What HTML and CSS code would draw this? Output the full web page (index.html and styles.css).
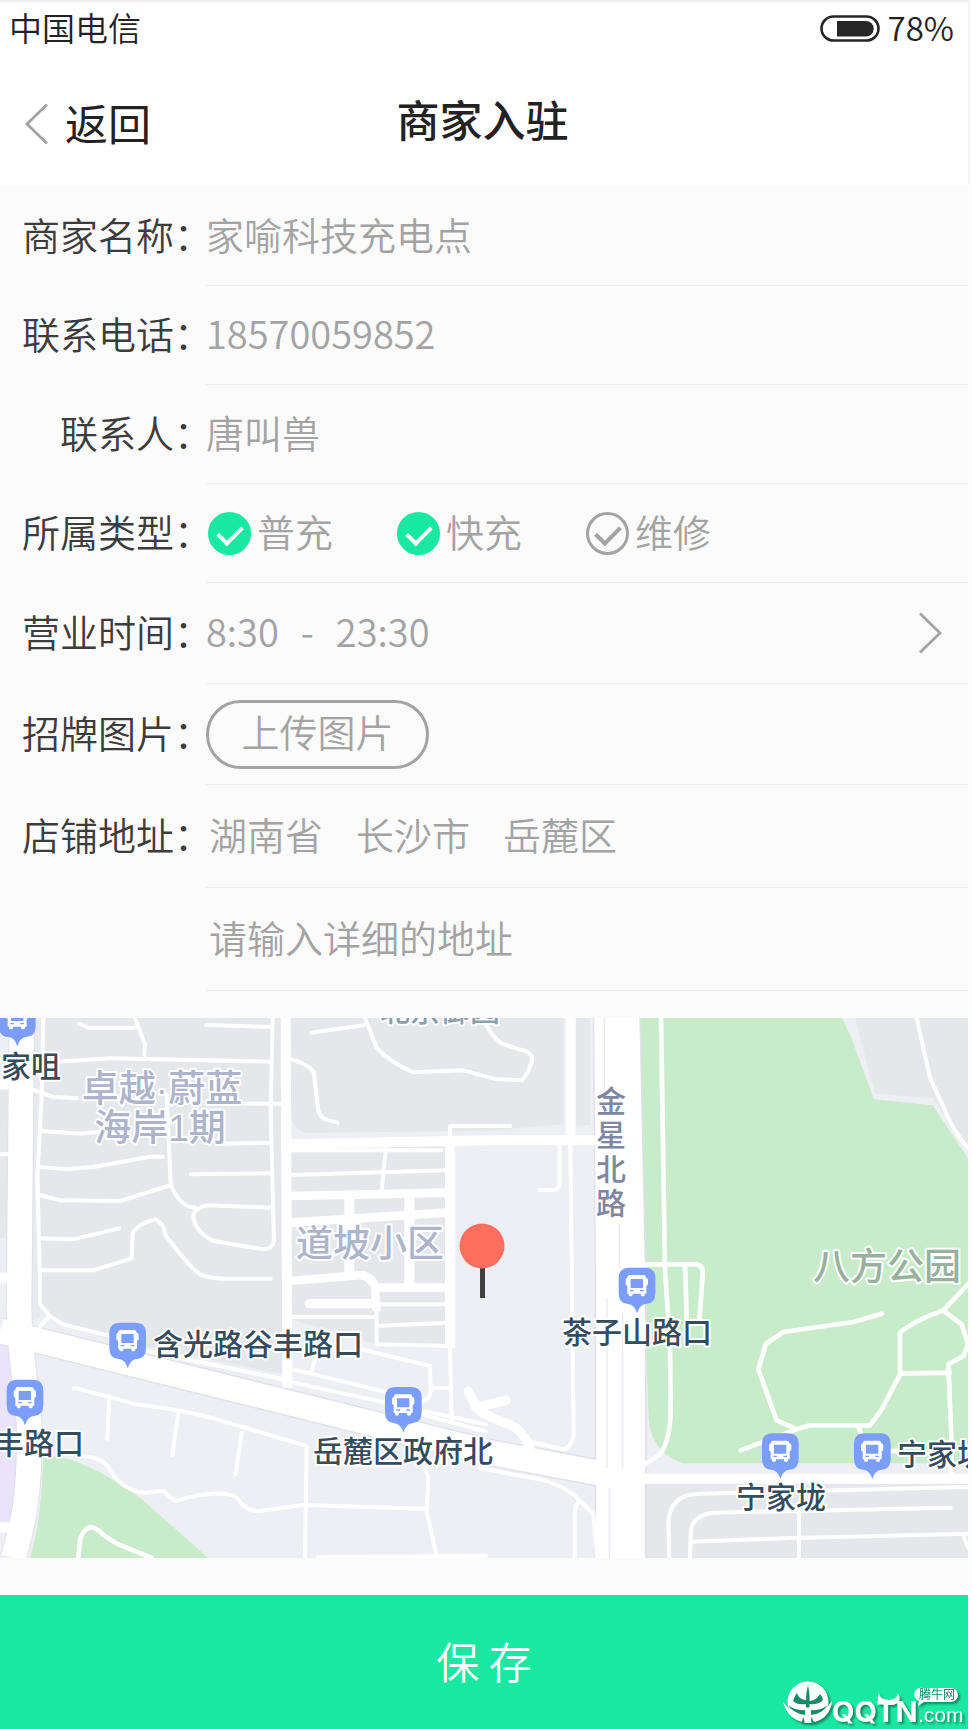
FILE: index.html
```html
<!DOCTYPE html>
<html lang="zh-CN">
<head>
  <meta charset="UTF-8" />
  <meta name="viewport" content="width=device-width, initial-scale=1.0" />
  <title>商家入驻</title>
  <link rel="stylesheet" href="styles.css">
</head>
<body>
  <div class="page">
    <!-- 顶部 -->
    <header class="header">
      <div class="status-bar">
        <span>中国电信</span>
        <span class="battery">
          <svg width="60" height="28" viewBox="0 0 60 28" aria-hidden="true">
            <rect x="1.500" y="1.500" width="57" height="24" rx="12" fill="none" stroke="#262626" stroke-width="2.600" />
            <path d="M17 6h29a7.700 7.700 0 0 1 0 15.400H17z" fill="#262626" />
          </svg>
          78%
        </span>
      </div>
      <div class="nav">
        <a class="back" href="#">
          <svg width="24" height="42" viewBox="0 0 24 42" aria-hidden="true">
            <path d="M22 1.500L2 21l20 19.500" fill="none" stroke="#a3a3a3" stroke-width="2.800" />
          </svg>
          <span>返回</span>
        </a>
        <h1>商家入驻</h1>
      </div>
    </header>

    <!-- 入驻表单 -->
    <form id="shop" class="form">
      <div class="row">
        <label class="label" for="name">商家名称：</label>
        <div class="field"><input type="text" id="name" value="家喻科技充电点" /></div>
      </div>
      <div class="row">
        <label class="label" for="phone">联系电话：</label>
        <div class="field"><input type="tel" id="phone" value="18570059852" /></div>
      </div>
      <div class="row">
        <label class="label" for="contact">联系人：</label>
        <div class="field"><input type="text" id="contact" value="唐叫兽" /></div>
      </div>
      <div class="row">
        <span class="label" id="typeLabel">所属类型：</span>
        <div class="field types" role="group" aria-labelledby="typeLabel">
          <label class="type"><input type="checkbox" checked /><span>普充</span></label>
          <label class="type"><input type="checkbox" checked /><span>快充</span></label>
          <label class="type"><input type="checkbox" /><span>维修</span></label>
        </div>
      </div>
      <div class="row row-md">
        <label class="label" for="hours">营业时间：</label>
        <div class="field">
          <button type="button" id="hours" class="hours">
            <span>8:30</span><span>-</span><span>23:30</span>
            <svg width="24" height="42" viewBox="0 0 24 42" aria-hidden="true">
              <path d="M2 1.500L22 21L2 40.500" fill="none" stroke="#a3a3a3" stroke-width="2.800" />
            </svg>
          </button>
        </div>
      </div>
      <div class="row row-md">
        <label class="label" for="upload">招牌图片：</label>
        <div class="field"><button type="button" id="upload" class="upload">上传图片</button></div>
      </div>
      <div class="row row-lg">
        <label class="label" for="province">店铺地址：</label>
        <div class="field area">
          <select id="province"><option>湖南省</option></select>
          <select aria-label="城市"><option>长沙市</option></select>
          <select aria-label="区县"><option>岳麓区</option></select>
        </div>
      </div>
      <div class="row row-lg">
        <span class="label"></span>
        <div class="field area"><input type="text" aria-label="详细地址" placeholder="请输入详细的地址" /></div>
      </div>
    </form>

    <!-- 地图 -->
    <svg class="map" viewBox="0 0 968 540" role="img" aria-label="地图">
      <svg width="968" height="540" viewBox="0 21 2904 1620">
        <defs>
          <g id="stop">
            <path d="M32 0h46q32 0 32 32v44q0 32-28 33q-20 2-27 28q-7-26-27-28q-28-1-28-33v-44q0-32 32-32z" fill="#7b9dfb" />
            <path d="M32 22h44q5 0 6 8q6 1 6 8v11q0 4-5 5v24h-5v3q0 5-6 5t-6-5v-3h-24v3q0 5-6 5t-6-5v-3h-4v-24q-5-1-5-5v-11q0-7 5-8q1-8 6-8z" fill="#fff" />
            <path d="M36 34h37v27h-37zM34 67h11v4h-11zM64 67h11v4h-11z" fill="#7b9dfb" />
          </g>
        </defs>

        <!-- 地块 -->
        <rect y="21" width="2904" height="1620" fill="#eeeff4" />
        <g fill="#e6e7eb">
          <path d="M125 21H850V1090L330 985L150 925L115 870z" />
          <path d="M100 21h30l-15 420l5 480l-25 10z" fill="#e9eaf0" />
          <path d="M870 21H1690V340L1458 360L920 365Q885 360 872 320z" />
          <path d="M1728 21h42v320l-42 4z" />
          <path d="M870 405H1335V1000L1130 1000L870 925z" />
          <path d="M0 240h22v440H0z" />
          <path d="M1935 1418H2904V1641H1935z" />
          <path d="M2565 21H2904V420L2800 262L2625 248z" />
        </g>
        <path d="M1918 21H2525L2550 70L2622 265L2798 283L2904 442V1357H2050Q1945 1325 1945 1200L1930 760z" fill="#c8ecca" />
        <path d="M130 1330L210 1345Q330 1390 420 1460L625 1641H90Q125 1530 130 1330z" fill="#c8ecca" />
        <path d="M0 980L22 1000L50 1190Q60 1400 32 1530H0z" fill="#e9e4fa" />

        <!-- 道路描边 -->
        <g fill="none" stroke="#dfe0ea" stroke-linejoin="round">
          <path d="M65 21L57 900C60 1050 85 1150 88 1250C90 1450 70 1540 40 1641" stroke-width="80" />
          <path d="M0 960L100 985L1458 1322L1860 1398" stroke-width="82" />
        </g>
        <path d="M1779 21H1922L1940 810V1641H1784V800z" fill="#dfe0ea" />

        <!-- 小路 -->
        <g fill="none" stroke="#fff" stroke-width="12" stroke-linejoin="round" stroke-linecap="round">
          <path d="M130 21L125 260L112 500L120 800V880L150 915L190 940L330 975M150 915L120 945" />
          <path d="M818 21L812 300L822 690Q815 715 790 715L640 690Q580 660 580 610Q590 590 620 583L815 590" />
          <path d="M238 38L265 50H405M405 21L435 100L433 132M618 42L815 48M125 155L330 142L810 152" />
          <path d="M95 235L160 258L230 262M735 278H845M125 360L240 368L300 362M670 398L815 395" />
          <path d="M500 250L512 520Q540 590 585 590M120 468L200 475L280 468L450 437H488M572 490L815 487" />
          <path d="M120 552L180 568L360 570L505 525M120 682L220 685L358 652" />
          <path d="M120 778H280L395 742L398 665Q420 635 465 625Q495 640 495 670Q560 760 600 790Q630 803 680 803H812" />
          <path d="M934 65L1090 43M1095 21L1130 110Q1170 155 1240 184L1390 178L1490 205L1565 208Q1585 190 1596 150Q1598 130 1580 122L1505 98Q1475 75 1458 40" />
          <path d="M875 145Q940 165 942 190L955 300Q965 325 985 328L1012 335M1350 385V345H1530" />
          <path d="M1679 400V510Q1680 537 1660 537H1618M1711 400L1721 1270Q1715 1310 1690 1315L1580 1290" />
          <path d="M870 418H1325M870 492L1340 478M1158 410L1145 538M0 430H25" />
          <path d="M1130 880H1340M880 918H1125M1132 945L1340 935M1130 830V1000L1350 1005L1355 1230" />
          <path d="M222 1130L410 1180Q560 1200 640 1222L920 1305L915 1641M328 1155L322 1283M535 1205L517 1333M725 1265L707 1390" />
          <path d="M250 1336Q310 1340 325 1370Q360 1435 430 1445L490 1440L525 1470Q590 1450 640 1448Q690 1445 710 1460Q740 1505 780 1500L910 1482L1275 1493M1275 1370L1285 1400L1280 1500L1310 1635M955 1638L1458 1634" />
          <path d="M440 1020L850 1105M880 1075L1165 1145M880 1115L1458 1240M1085 1015L1290 1065L1292 1140Q1290 1165 1265 1172M1300 1130H1350M1265 1210L1458 1262M945 1045L935 1080" />
          <path d="M1440 1372L1620 1405Q1700 1425 1740 1470L1780 1510L1793 1641M1740 1470Q1725 1480 1724 1510V1641" />
          <path d="M2750 21L2790 200L2840 310Q2870 375 2904 410" />
          <path d="M2904 1428L2100 1448Q2005 1450 2005 1540L2008 1641M2852 1490L2140 1505Q2070 1515 2072 1570L2070 1641M2072 1592L2400 1580H2420L2904 1568M2397 1500V1641M2890 1572L2904 1610" />
        </g>
        <g fill="none" stroke="#fff" stroke-width="14" stroke-linejoin="round" stroke-linecap="round">
          <path d="M235 1641L240 1585Q265 1520 310 1572L350 1598L455 1641" />
          <path d="M1983 21L1995 780L2010 1000L2012 1200Q2010 1290 1980 1330L1935 1360" />
          <path d="M1930 760H2090Q2110 762 2108 790L2098 930M2055 765L2060 920" />
          <path d="M2645 908L2560 933L2350 963L2298 998L2275 1075L2330 1228L2380 1250M2222 1318L2390 1255L2430 1243H2610L2645 1195L2700 1090V965Q2740 930 2830 898L2904 820" />
          <path d="M2830 898L2885 940L2904 1000L2890 1035L2845 1060L2855 1300V1400M2700 1088L2850 1085M2575 1245L2590 1290M2670 1320H2700" />
        </g>

        <!-- 主干道 -->
        <g fill="none" stroke="#fff" stroke-linejoin="round">
          <path d="M65 21L57 900C60 1050 85 1150 88 1250C90 1450 70 1540 40 1641M0 960L100 985L1458 1322L1860 1398" stroke-width="74" />
          <path d="M0 220H80M0 800H40M0 1550H60M857 21L862 1130M870 400L1458 388H1790M1350 400V1012M1712 21V395M1930 1403H2904" stroke-width="30" />
          <path d="M870 555L1340 545M870 635L1340 605M870 810L1085 792Q1120 800 1130 840M1130 830H1345M1125 840L1130 900" stroke-width="26" />
          <path d="M1048 560V800M1228 560V830" stroke-width="30" />
          <path d="M928 878H1130M1405 1140L1425 1180Q1440 1190 1458 1182L1518 1168M1425 1185Q1450 1215 1530 1240Q1570 1260 1590 1310" stroke-width="28" stroke-linecap="round" />
        </g>
        <path d="M1783 21H1918L1935 810V1641H1788V800z" fill="#fff" />
        <g fill="none" stroke="#e9eaf2" stroke-width="4">
          <path d="M1813 21V240M1858 640V770M1821 860V1370M1868 910V1370M1828 1430V1641" />
        </g>

        <!-- 公交站 -->
        <use href="#stop" x="-3" y="-31" />
        <use href="#stop" x="328" y="935" />
        <use href="#stop" x="20" y="1106" />
        <use href="#stop" x="1155" y="1128" />
        <use href="#stop" x="1856" y="770" />
        <use href="#stop" x="2286" y="1267" />
        <use href="#stop" x="2562" y="1267" />
      </svg>

      <g class="map-area">
        <text x="162" y="84" text-anchor="middle">卓越·蔚蓝</text>
        <text x="160" y="123" text-anchor="middle">海岸1期</text>
        <text x="370" y="239" text-anchor="middle">道坡小区</text>
        <text class="park" x="887" y="262" text-anchor="middle">八方公园</text>
      </g>
      <g class="map-stop">
        <text x="-29" y="59">黄家咀</text>
        <text class="muted" x="440" y="3" text-anchor="middle">北京御园</text>
        <text x="153" y="337">含光路谷丰路口</text>
        <text x="84" y="436" text-anchor="end">谷丰路口</text>
        <text x="403" y="444" text-anchor="middle">岳麓区政府北</text>
        <text x="637" y="325" text-anchor="middle">茶子山路口</text>
        <text x="781" y="490" text-anchor="middle">宁家垅</text>
        <text x="897" y="447">宁家垅</text>
        <text class="road" y="94"><tspan x="596">金</tspan><tspan x="596" dy="34">星</tspan><tspan x="596" dy="34">北</tspan><tspan x="596" dy="34">路</tspan></text>
      </g>

      <!-- 定位点 -->
      <rect x="480" y="245" width="5" height="35" fill="#3f3f3f" />
      <circle cx="482" cy="228" r="22.500" fill="#ff6f5e" />
    </svg>

    <!-- 保存 -->
    <div class="footer">
      <button type="submit" form="shop" class="save">保 存</button>
      <svg class="brand" width="196" height="57" viewBox="0 0 196 57" role="img" aria-label="QQTN.com 腾牛网">
        <circle cx="32" cy="29" r="20.500" fill="#fff" />
        <path d="M7 29Q17 42 32 40Q47 42 56 28Q54 48 32 50Q12 48 7 29z" fill="#fff" />
        <path d="M32 12Q34 22 33.500 28Q40 28 44 21Q49 27 45 29Q39 32 33.500 31V34Q32 35 30 34V31Q22 32 18 29Q16 27 21 20Q23 27 30 27Q30 20 32 12z" fill="#178a68" />
        <path d="M11 32Q20 38 29 37V42Q19 41 11 32zM35 37Q45 38 52 32Q46 41 35 42zM27 44Q29 46 28 50H25Q27 47 27 44zM36 44Q36 47 39 50H36Q34 47 36 44z" fill="#178a68" />
        <path d="M103 20Q98 32 113 32Q128 32 122 20Q121 27 113 27Q104 27 103 20z" fill="#fff" />
        <text class="brand-name" x="56" y="49">QQTN</text>
        <text class="brand-com" x="142" y="49">.com</text>
        <path d="M147 15h28a6.500 6.500 0 0 1 0 14h-27l-6 4l1-5a6.500 6.500 0 0 1 4-13z" fill="#fff" />
        <text class="brand-tag" x="143" y="26">腾牛网</text>
      </svg>
    </div>
  </div>
</body>
</html>
```
FILE: styles.css
```css
:root {
  --bg-color: #fbfbfb;
  --primary: #19e8a2;
  --text-primary: #222222;
  --text-label: #3c3c3c;
  --text-value: #a3a3a3;
  --border: #eeeeee;
}
* {
  box-sizing: border-box;
  margin: 0;
  padding: 0;
}
body {
  font-family: 'Noto Sans CJK SC', 'Noto Sans', sans-serif;
  background-color: #fdfdfd;
  color: var(--text-primary);
}
button, input, select {
  font: inherit;
  color: inherit;
  background: none;
  border: none;
  outline: none;
}
.page {
  margin-right: 4px;
  background-color: var(--bg-color);
}

/* 顶部 */
.header {
  height: 185px;
  background-color: #ffffff;
  border-top: 2px solid #f0f0f0;
  box-shadow: 2px 0 0 #f5f5f5;
}
.status-bar {
  display: flex;
  justify-content: space-between;
  padding: 0 14px 0 9px;
  font-size: 33px;
  font-weight: 350;
  line-height: 50px;
}
.battery {
  display: flex;
  align-items: center;
  gap: 8px;
}
.battery svg {
  margin-top: 4px;
}
.nav {
  display: grid;
  grid-template-columns: 1fr auto 1fr;
  align-items: start;
  padding: 34px 28px 0 25px;
  line-height: 64px;
}
.back {
  display: flex;
  align-items: center;
  gap: 16px;
  padding-top: 8px;
  font-size: 43px;
  color: inherit;
  text-decoration: none;
}
.back span {
  margin-top: -4px;
}
.nav h1 {
  font-size: 43px;
  font-weight: 500;
}

/* 表单 */
.form {
  padding-top: 2px;
  font-size: 38px;
  font-weight: 350;
}
.row {
  display: flex;
  align-items: center;
  height: 99px;
}
.row-md {
  height: 101px;
}
.row-lg {
  height: 103px;
}
.label {
  flex: none;
  width: 212px;
  margin-right: -6px;
  padding-bottom: 6px;
  text-align: right;
  white-space: nowrap;
  color: var(--text-label);
}
.field {
  flex: 1;
  display: flex;
  align-items: center;
  height: 100%;
  border-bottom: 1px solid var(--border);
  color: var(--text-value);
}
.field input[type="text"],
.field input[type="tel"] {
  width: 100%;
  padding-bottom: 6px;
}
.field input::placeholder {
  color: inherit;
}
.types {
  gap: 64px;
  padding-left: 2px;
}
.type {
  display: flex;
  align-items: center;
  gap: 6px;
}
.type span,
.hours span {
  padding-bottom: 6px;
}
.type input {
  appearance: none;
  display: flex;
  justify-content: center;
  width: 43px;
  height: 43px;
  border: 3px solid var(--text-value);
  border-radius: 50%;
}
.type input::before {
  content: '';
  width: 20px;
  height: 11px;
  margin-top: 10px;
  border: solid var(--text-value);
  border-width: 0 0 4px 4px;
  transform: rotate(-45deg);
}
.type input:checked {
  border-color: var(--primary);
  background-color: var(--primary);
}
.type input:checked::before {
  border-color: #ffffff;
}
.hours {
  flex: 1;
  display: flex;
  align-items: center;
  gap: 22px;
  padding-right: 26px;
  cursor: pointer;
}
.hours svg {
  margin-left: auto;
}
.upload {
  width: 223px;
  height: 69px;
  padding-bottom: 6px;
  border: 3px solid var(--text-value);
  border-radius: 35px;
  line-height: 56px;
  cursor: pointer;
}
.area {
  gap: 32px;
  padding-left: 3px;
}
.area select {
  appearance: none;
  padding-bottom: 6px;
}

/* 地图 */
.map {
  display: block;
  width: 100%;
  margin-top: 27px;
}
.map text {
  stroke: #ffffff;
  stroke-width: 4px;
  stroke-linejoin: round;
  paint-order: stroke;
}
.map-area {
  font-family: 'Liberation Sans', 'Noto Sans CJK SC', sans-serif;
  font-size: 37px;
  font-weight: 500;
  fill: #adb4cb;
}
.map-area .park {
  fill: #98b09e;
}
.map-stop {
  font-size: 30px;
  font-weight: 500;
  fill: #344c5c;
}
.map-stop .muted {
  fill: #8aa0ad;
}
.map-stop .road {
  fill: #7d86a3;
}

/* 底部 */
.footer {
  position: relative;
  margin-top: 37px;
}
.save {
  display: block;
  width: 100%;
  height: 135px;
  padding-bottom: 6px;
  background-color: var(--primary);
  font-size: 43px;
  font-weight: 350;
  color: #ffffff;
  cursor: pointer;
}
.brand {
  position: absolute;
  right: -4px;
  bottom: 0;
  filter: drop-shadow(2px 2px 1px rgba(0, 70, 50, 0.6));
}
.brand text {
  fill: #ffffff;
}
.brand-name {
  font-family: Inter, sans-serif;
  font-size: 29px;
  font-weight: 700;
}
.brand-com {
  font-family: 'Liberation Sans', sans-serif;
  font-size: 21px;
}
.brand .brand-tag {
  font-size: 12px;
  fill: #178a68;
}
```
